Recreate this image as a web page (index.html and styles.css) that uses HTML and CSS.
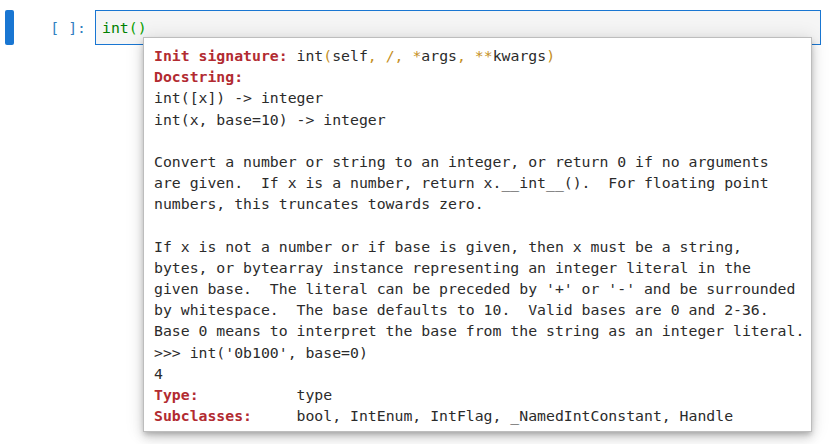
FILE: index.html
```html
<!DOCTYPE html>
<html>
<head>
<meta charset="utf-8">
<link rel="stylesheet" href="styles.css">
</head>
<body>
<div class="cell">
  <div class="collapser"></div>
  <div class="prompt">[ ]:</div>
  <div class="editor"><span class="kw">int</span><span class="br">()</span></div>
</div>
<div class="tooltip"><pre class="doc"><span class="h">Init signature:</span> int<span class="p">(</span>self<span class="p">,</span> <span class="p">/,</span> <span class="p">*</span>args<span class="p">,</span> <span class="p">**</span>kwargs<span class="p">)</span>
<span class="h">Docstring:</span>
int([x]) -&gt; integer
int(x, base=10) -&gt; integer

Convert a number or string to an integer, or return 0 if no arguments
are given.  If x is a number, return x.__int__().  For floating point
numbers, this truncates towards zero.

If x is not a number or if base is given, then x must be a string,
bytes, or bytearray instance representing an integer literal in the
given base.  The literal can be preceded by '+' or '-' and be surrounded
by whitespace.  The base defaults to 10.  Valid bases are 0 and 2-36.
Base 0 means to interpret the base from the string as an integer literal.
&gt;&gt;&gt; int('0b100', base=0)
4
<span class="h">Type:</span>           type
<span class="h">Subclasses:</span>     bool, IntEnum, IntFlag, _NamedIntConstant, Handle</pre></div>
</body>
</html>
```
FILE: styles.css
```css
html, body {
  margin: 0;
  padding: 0;
  background: #ffffff;
}
body {
  width: 839px;
  height: 444px;
  overflow: hidden;
  position: relative;
  font-family: "DejaVu Sans Mono", "Liberation Mono", monospace;
}
.cell {
  display: flex;
  align-items: stretch;
  padding: 10px 0 0 5px;
  height: 35px;
}
.collapser {
  width: 9px;
  background: #1976d2;
  border-radius: 2px;
}
.prompt {
  width: 72px;
  text-align: right;
  color: #307fc1;
  font-size: 14.8px;
  line-height: 35px;
  padding-right: 9px;
  box-sizing: content-box;
}
.editor {
  width: 724px;
  border: 1px solid #1976d2;
  background: #f5f5f5;
  font-size: 14.8px;
  line-height: 33px;
  padding-left: 6px;
  box-sizing: border-box;
  width: 726px;
}
.kw { color: #008000; }
.br { color: #0aa000; }
.tooltip {
  position: absolute;
  left: 143px;
  top: 37px;
  width: 669px;
  height: 395px;
  box-sizing: border-box;
  background: #ffffff;
  border: 1px solid #bdbdbd;
  box-shadow: 0 3px 5px -1px rgba(0,0,0,0.2), 0 6px 10px 0 rgba(0,0,0,0.14), 0 1px 18px 0 rgba(0,0,0,0.12);
  padding: 7px 0 0 10px;
}
.doc {
  margin: 0;
  font-family: "DejaVu Sans Mono", "Liberation Mono", monospace;
  font-size: 14.8px;
  line-height: 21.18px;
  color: #2b2b2b;
  white-space: pre;
}
.h { color: #b22b31; font-weight: bold; }
.p { color: #c58f1e; }
```
